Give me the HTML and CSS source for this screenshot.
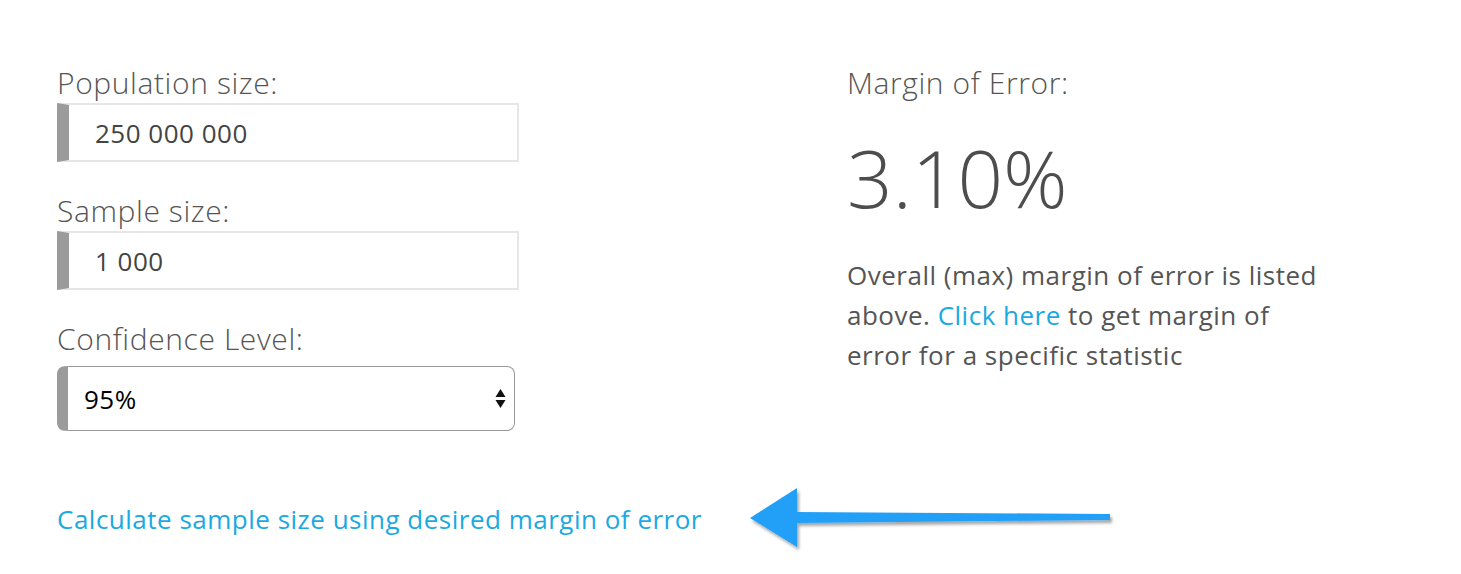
FILE: index.html
```html
<!DOCTYPE html>
<html lang="en">
<head>
    <meta charset="UTF-8">
    <meta name="viewport" content="width=device-width, initial-scale=1.0">
    <title>Margin of Error Calculator</title>
    <link rel="stylesheet" href="styles.css">
</head>
<body>
    <div class="calculator">
        <div class="inputs">
            <div class="field">
                <label for="population">Population size:</label>
                <input type="text" id="population" class="text-input" value="250 000 000">
            </div>
            <div class="field">
                <label for="sample">Sample size:</label>
                <input type="text" id="sample" class="text-input" value="1 000">
            </div>
            <div class="field field-select">
                <label for="confidence">Confidence Level:</label>
                <div class="select-box">
                    <select id="confidence">
                        <option>80%</option>
                        <option>85%</option>
                        <option>90%</option>
                        <option selected>95%</option>
                        <option>99%</option>
                    </select>
                    <svg class="select-arrows" width="11" height="24" viewBox="0 0 11 24">
                        <polygon points="5.5,2 10.5,10 0.5,10" fill="#111"/>
                        <polygon points="0.5,13 10.5,13 5.5,21" fill="#111"/>
                    </svg>
                </div>
            </div>
        </div>
        <div class="result">
            <div class="result-title">Margin of Error:</div>
            <div class="result-value">3.10%</div>
            <p class="result-note">Overall (max) margin of error is listed above. <a href="#">Click here</a> to get margin of error for a specific statistic</p>
        </div>
    </div>
    <div class="footer-row">
        <a href="#" class="switch-link">Calculate sample size using desired margin of error</a>
        <svg class="pointer" width="375" height="72" viewBox="0 0 375 72">
            <defs>
                <filter id="shadow" x="-10%" y="-20%" width="120%" height="150%">
                    <feDropShadow dx="2" dy="3" stdDeviation="1.5" flood-color="#000" flood-opacity="0.35"/>
                </filter>
            </defs>
            <polygon points="5,35 52,5 52,29 365,31 365,37 52,40 52,64" fill="#24a0f7" filter="url(#shadow)"/>
        </svg>
    </div>
</body>
</html>
```

FILE: styles.css
```css
body {
    margin: 0;
    padding: 65px 0 0 57px;
    font-family: "Open Sans", "Liberation Sans", sans-serif;
    color: #555;
    background: #fff;
}
.calculator {
    display: grid;
    grid-template-columns: 790px 480px;
}
.field {
    margin-bottom: 31px;
}
.field label, .result-title {
    display: block;
    font-size: 30px;
    font-weight: 300;
    line-height: 36px;
    letter-spacing: 0.6px;
    color: #555;
    margin-bottom: 2px;
}
.text-input {
    box-sizing: border-box;
    width: 462px;
    height: 59px;
    margin: 0;
    padding: 0 0 0 26px;
    border: 2px solid #e6e6e6;
    border-left: 12px solid #9b9b9b;
    border-radius: 0;
    font-family: inherit;
    font-size: 26px;
    letter-spacing: 0.5px;
    color: #444;
    outline: none;
}
.field-select label {
    margin-bottom: 9px;
}
.select-box {
    box-sizing: border-box;
    width: 458px;
    height: 65px;
    display: flex;
    align-items: center;
    border: 1px solid #999;
    border-left: 11px solid #9b9b9b;
    border-radius: 8px;
    padding-right: 8px;
}
.select-box select {
    flex: 1;
    appearance: none;
    -webkit-appearance: none;
    border: none;
    background: transparent;
    padding: 0 0 0 16px;
    font-family: inherit;
    font-size: 26px;
    letter-spacing: 0.5px;
    color: #000;
    outline: none;
}
.result-value {
    margin-top: 28px;
    font-size: 80px;
    font-weight: 300;
    line-height: 96px;
    color: #4d4d4d;
}
.result-note {
    margin: 30px 0 0;
    font-size: 26px;
    line-height: 40px;
    letter-spacing: 0.5px;
    color: #555;
}
.result-note a, .switch-link {
    color: #1aa9e1;
    text-decoration: none;
}
.footer-row {
    display: grid;
    grid-template-columns: 688px 375px;
    align-items: center;
    margin-top: 21px;
}
.switch-link {
    font-size: 26px;
    line-height: 40px;
    letter-spacing: 0.5px;
}
```
